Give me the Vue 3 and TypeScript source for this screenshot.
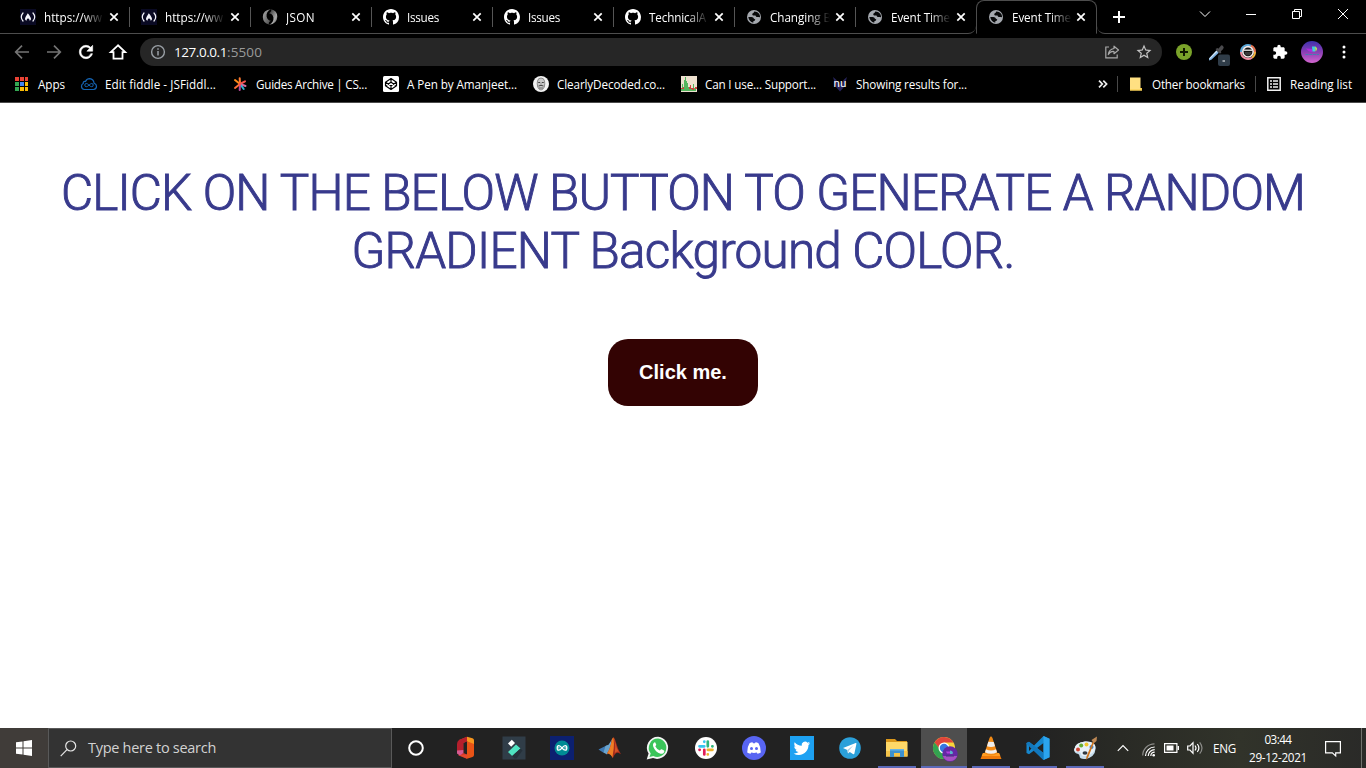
<script setup lang="ts">
interface Tab { icon: string; title: string; width: number; active?: boolean }
interface Bookmark { icon: string; title: string; width: number }
interface TaskApp { icon: string; name: string; state?: 'open' | 'current' }

// Spreads the letters of a label so that it takes exactly the given width.
const vFit = {
  mounted(el: HTMLElement, binding: { value: number }) {
    const natural = el.getBoundingClientRect().width
    const count = (el.textContent ?? '').trim().length
    if (count > 0) el.style.letterSpacing = `${(binding.value - natural) / count}px`
  },
}

const tabs: Tab[] = [
  { icon: 'fcc', title: 'https://ww', width: 58 },
  { icon: 'fcc', title: 'https://ww', width: 58 },
  { icon: 'json', title: 'JSON', width: 29 },
  { icon: 'github', title: 'Issues', width: 32 },
  { icon: 'github', title: 'Issues', width: 32 },
  { icon: 'github', title: 'TechnicalA', width: 57 },
  { icon: 'globe', title: 'Changing B', width: 61 },
  { icon: 'globe', title: 'Event Time', width: 59 },
  { icon: 'globe', title: 'Event Time', width: 59, active: true },
]

const bookmarks: Bookmark[] = [
  { icon: 'apps', title: 'Apps', width: 27 },
  { icon: 'fiddle', title: 'Edit fiddle - JSFiddl...', width: 111 },
  { icon: 'css', title: 'Guides Archive | CS...', width: 111 },
  { icon: 'codepen', title: 'A Pen by Amanjeet...', width: 110 },
  { icon: 'face', title: 'ClearlyDecoded.co...', width: 108 },
  { icon: 'caniuse', title: 'Can I use... Support...', width: 111 },
  { icon: 'nu', title: 'Showing results for...', width: 111 },
]

const apps: TaskApp[] = [
  { icon: 'cortana', name: 'Cortana' },
  { icon: 'office', name: 'Office' },
  { icon: 'filmora', name: 'Filmora' },
  { icon: 'arduino', name: 'Arduino' },
  { icon: 'matlab', name: 'MATLAB' },
  { icon: 'whatsapp', name: 'WhatsApp' },
  { icon: 'slack', name: 'Slack' },
  { icon: 'discord', name: 'Discord' },
  { icon: 'twitter', name: 'Twitter' },
  { icon: 'telegram', name: 'Telegram' },
  { icon: 'explorer', name: 'Explorer', state: 'open' },
  { icon: 'chrome', name: 'Chrome', state: 'current' },
  { icon: 'vlc', name: 'VLC', state: 'open' },
  { icon: 'vscode', name: 'Code', state: 'open' },
  { icon: 'paint', name: 'Paint', state: 'open' },
]

// Markup on a 16-unit grid, used in the browser chrome.
const small: Record<string, string> = {
  fcc: '<rect width="16" height="16" fill="#0a0a23"/><g fill="none" stroke="#f4f4fa" stroke-width="1.2" stroke-linecap="round"><path d="M3 4Q-.4 8 3 12M13 4q3.400 4 0 8"/></g><path d="M7.800 4.300q3.200 4 3.200 5.700 0 1.300-1.300 1.700 0-1.800-1.700-2.500-1.500.7-1.500 2.500Q5 11.300 5 10q0-1.500 2.800-5.700z" fill="#f4f4fa"/>',
  json: '<defs><linearGradient id="jg" x1="0" x2="1" y1="0" y2="1"><stop offset="0" stop-color="#222"/><stop offset=".65" stop-color="#aaa"/><stop offset="1" stop-color="#555"/></linearGradient><linearGradient id="jh" x1="1" x2="0" y1="1" y2="0"><stop offset="0" stop-color="#444"/><stop offset=".8" stop-color="#999"/></linearGradient></defs><path d="M9 11.800Q6 13.500 7 15.500 1 14 .8 8 1 1 9 .3 4 2.500 4.600 7.500q.8 4 4.400 4.300z" fill="url(#jh)"/><path d="M7 4.200Q10 2.500 9 .3q6.300 1.200 6.300 7.400Q15 15 7 15.700q5-2.200 4.400-7.200Q10.600 4.500 7 4.200z" fill="url(#jg)"/>',
  github: '<path fill="#fff" d="M8 0C3.58 0 0 3.58 0 8c0 3.54 2.29 6.53 5.47 7.59.4.07.55-.17.55-.38 0-.19-.01-.82-.01-1.49-2.01.37-2.53-.49-2.69-.94-.09-.23-.48-.94-.82-1.13-.28-.15-.68-.52-.01-.53.63-.01 1.08.58 1.23.82.72 1.21 1.87.87 2.33.66.07-.52.28-.87.51-1.07-1.78-.2-3.64-.89-3.64-3.95 0-.87.31-1.59.82-2.15-.08-.2-.36-1.02.08-2.12 0 0 .67-.21 2.2.82.64-.18 1.32-.27 2-.27s1.36.09 2 .27c1.53-1.04 2.2-.82 2.2-.82.44 1.1.16 1.92.08 2.12.51.56.82 1.27.82 2.15 0 3.07-1.87 3.75-3.65 3.95.29.25.54.73.54 1.48 0 1.07-.01 1.93-.01 2.2 0 .21.15.46.55.38A8.01 8.01 0 0 0 16 8c0-4.42-3.58-8-8-8z"/>',
  globe: '<circle cx="8" cy="8" r="7" fill="#a5a9af"/><path d="M8.300 2.500q-.3 1.500-2 2.200-.3 1.600.9 1.800H9.500q.5 2 2.200 1.500.8-.2 2.400.2Q14 4.500 11 3q-1.500-.6-2.700-.5zM2.300 8 5.500 8q2 .2 2.500 1.700l1.300.7q-.3 1.800-2 1.800v1.500Q3 12.800 2.300 8z" fill="#08090a"/>',
  apps: '<path d="M1 1h4v4H1zM6 1h4v4H6zM11 1h3v4h-3z" fill="#ea4335"/><path d="M1 6h4v4H1zM1 11h4v4H1z" fill="#34a853"/><path d="M6 6h4v4H6z" fill="#4285f4"/><path d="M11 6h3v4h-3zM6 11h4v4H6zM11 11h3v4h-3z" fill="#fbbc05"/><path d="M5.500 1v14M10.500 1v14M1 5.500h14M1 10.500h14" stroke="#000"/>',
  fiddle: '<g fill="none" stroke="#1565b5"><path d="M3.500 13.500h9q3-.5 3-3.300 0-2.200-2.400-3-.5-4-4.300-4.500-3 0-4.300 2.800-2.500-.4-2.300 2-1.700.6-1.700 2.700 0 3 3 3.300z" stroke-width="1.200"/><path d="M8 9.200Q6.500 7.500 5.300 7.500q-1.500 0-1.500 1.600t1.500 1.600q1.200 0 2.700-1.500t2.700-1.700q1.500 0 1.500 1.600t-1.500 1.600Q9.500 10.700 8 9.200z"/></g>',
  css: '<g stroke-width="2" stroke-linecap="round"><path d="M8 8 7.700 2.200" stroke="#ff7a30"/><path d="m8 8 5-2.700" stroke="#f5544d"/><path d="m8 8 5.500 2" stroke="#d96ba0"/><path d="m8 8 3.700 5" stroke="#35b5d5"/><path d="m8 8-.3 6" stroke="#b84a9c"/><path d="m8 8-5 4" stroke="#ff6b36"/><path d="M8 8 3 4" stroke="#ff8a18"/></g><circle cx="8" cy="8" r="1.500" fill="#f5544d"/>',
  codepen: '<rect width="16" height="16" rx="1.500" fill="#fff"/><path d="m8 2.500 5.500 3.700v3.600L8 13.500 2.500 9.800V6.200zM2.500 6.200 8 9.800l5.500-3.600M2.500 9.800 8 6.200l5.500 3.600M8 2.500v3.700M8 9.800v3.700" fill="none" stroke="#000" stroke-width="1.200" stroke-linejoin="round"/>',
  face: '<circle cx="8" cy="8" r="8" fill="#f2f2f2"/><path d="M4.500 5Q5 2 8 2t3.500 3q.7 2.500-.2 6Q10 14 8 14t-3.300-3Q3.800 7 4.500 5z" fill="#c9c9c9" stroke="#777" stroke-width=".8"/><path d="M5.200 6.500h2M8.800 6.500h2M5.500 10Q8 8.700 10.500 10" stroke="#444" fill="none"/><path d="M6 12h4" stroke="#666"/><path d="M8 7v2" stroke="#999"/>',
  caniuse: '<path fill="#eee1cf" d="M0 0h16v16H0z"/><path d="M0 13h1V8h1v5h1V4h1V1h1v4h1v2h1v4h1v2h1v-3h1v2h2V8h1v4h2v3H0z" fill="#54b65e"/><path d="M0 12h2v-1h1v2H0zM8 13v-2h1V9h1v3h3v2h-2v-1zM14 11h2v2h-2z" fill="#c9443e"/>',
  nu: '<path d="M1 1 4 3.500l4 6 4-6L15 1l-3 10-4 4.500L4 11z" fill="#27245c"/><text x="1.500" y="11" textLength="12.800" lengthAdjust="spacingAndGlyphs" font-family="Roboto, sans-serif" font-size="10.500" font-weight="400" fill="#fff">nu</text>',
  folder: '<path d="M2 1.500h10.500V12H14v2.500H2z" fill="#ffe082"/><path d="M2 14.500h12V12h-1.500v1.500H2z" fill="#f5ca45"/>',
  list: '<path d="M1.800 1.800h12.400v12.400H1.800z" fill="none" stroke="#f1f1f1" stroke-width="1.500"/><path d="M4 5h2M4 8h2M4 11h2M7 5h5M7 8h5M7 11h5" stroke="#f1f1f1" stroke-width="1.500"/>',
  info: '<circle cx="8" cy="8" r="6.400" fill="none" stroke="#9aa0a6" stroke-width="1.400"/><path d="M8 7v4.500M8 4.300v1.500" stroke="#9aa0a6" stroke-width="1.500"/>',
  back: '<path d="M15 8H2M8 1.700 1.700 8 8 14.300" fill="none" stroke="#747474" stroke-width="1.700"/>',
  forward: '<path d="M1 8h13M8 1.700 14.300 8 8 14.300" fill="none" stroke="#747474" stroke-width="1.700"/>',
  home: '<path d="M8 1.300.800 8.200h2.700v6.500h9V8.200h2.700z" fill="none" stroke="#fff" stroke-width="1.800"/>',
  share: '<g fill="none" stroke="#a9a9a9" stroke-width="1.200"><path d="M5 3H1.800v10.800h11.400V10.500"/><path d="M10 2.200 14.500 6 10 9.700V7.500Q6.500 7 4.300 10.500 4.800 5.500 10 4.500z" stroke-linejoin="round"/></g>',
  plus: '<circle cx="8" cy="8" r="8" fill="#7aa32a"/><path d="M8 4v8M4 8h8" stroke="#101800" stroke-width="2"/>',
  ring: '<g fill="none" stroke-width="2"><path d="M1 8a7 7 0 0 1 10-6.300" stroke="#5aa7d8"/><path d="M11 1.700A7 7 0 0 1 15 8" stroke="#e87352"/><path d="M15 8a7 7 0 0 1-3 5.700" stroke="#f2b43e"/><path d="M12 13.700A7 7 0 0 1 1 8" stroke="#ee8ba0"/></g><circle cx="8" cy="7.800" r="5.200" fill="#111" stroke="#f5eeee" stroke-width="1.600"/><path d="M4 5.500h8v1.500H4z" fill="#ccc"/><path d="M4.500 8h7q-.5 3.500-3.500 3.500T4.500 8z" fill="#393939"/>',
}

// Markup on a 24-unit grid, used in the toolbar and on the taskbar.
const large: Record<string, string> = {
  refresh: '<path fill="#fff" stroke="#fff" stroke-width=".700" d="M17.650 6.350A7.958 7.958 0 0 0 12 4c-4.420 0-7.990 3.580-7.990 8s3.570 8 7.990 8c3.730 0 6.840-2.550 7.730-6h-2.080A5.990 5.990 0 0 1 12 18c-3.310 0-6-2.690-6-6s2.690-6 6-6c1.660 0 3.140.69 4.220 1.780L13 11h7V4l-2.350 2.350z"/>',
  star: '<path fill="#c3c3c3" d="M22 9.240l-7.190-.62L12 2 9.190 8.630 2 9.240l5.460 4.730L5.820 21 12 17.270 18.180 21l-1.630-7.030L22 9.240zM12 15.400l-3.760 2.270 1-4.280-3.320-2.880 4.380-.38L12 6.100l1.710 4.040 4.380.38-3.320 2.880 1 4.280L12 15.400z"/>',
  puzzle: '<path fill="#fff" d="M20.500 11H19V7c0-1.100-.9-2-2-2h-4V3.500C13 2.120 11.880 1 10.500 1S8 2.120 8 3.500V5H4c-1.100 0-1.990.9-1.990 2v3.800H3.500c1.490 0 2.700 1.210 2.700 2.700s-1.210 2.700-2.700 2.700H2V20c0 1.100.9 2 2 2h3.800v-1.500c0-1.490 1.210-2.700 2.700-2.700 1.490 0 2.700 1.210 2.700 2.700V22H17c1.100 0 2-.9 2-2v-4h1.500c1.380 0 2.500-1.120 2.500-2.500S21.880 11 20.500 11z"/>',
  picker: '<path d="m3 16.500 7.500-8 2.300 2.300-7.500 7-2.300.7z" fill="#80b3e3"/><path d="m3 16.500 7.500-8 1 1-7.700 7.500z" fill="#d5e8f7"/><path d="m9.500 7 2-1 .8.8 2-2.300Q15.500 2.500 17 4t0 3.300L14.800 9.300l.6 1-1.400 1.400z" fill="#4b4b4e"/><rect x="12" y="12.500" width="12" height="11.500" rx="2" fill="#2f3c48"/><path d="M16.500 19h2.500" stroke="#fff"/>',
  cortana: '<circle cx="12" cy="12" r="6.800" fill="none" stroke="#fff" stroke-width="2"/>',
  office: '<path d="m5 4 8-3.300v4.600L9.300 7v10L13 18.500v4.200L4.500 19.500 5 17z" fill="#d8392c"/><path d="M5 4q-2 1.500-2 4v8.500q1 2.500 3.500 2l2.800-1.500V7L13 5.300V.700z" fill="#b51f2c"/><path d="M3 14.500v3l3 2 3.300-2.500v-3z" fill="#d65a92"/><path d="m13 .700 5.500 1.600q1.500.5 1.500 2V10l-7-4.500z" fill="#f7961e"/><path d="M13 5.300 20 8v11q0 1.500-1.500 2L13 22.700z" fill="#e95316"/><path d="M5.500 19.300 13 18.500v4.200z" fill="#e34a2e"/>',
  filmora: '<path d="M.500.500h23v23H.500z" fill="#303d48"/><path d="m6 7.500 3.800-3.800L13 7l-3.800 3.800z" fill="#fff"/><path d="m6 16 8-7.500 4.500 4-8.300 7.500z" fill="#4fe3c1"/><path d="m10.200 20 8.300-7.500 2 2-6 8h-2z" fill="#26313a"/>',
  arduino: '<path d="M0 0h24v24H0z" fill="#0c2070"/><circle cx="12" cy="12" r="7.500" fill="#008b94"/><path d="M12 12q-1.800-2.300-3.200-2.300-1.600 0-1.600 2.200T8.800 14.100q1.400 0 3.200-2.100 1.800-2.300 3.200-2.300 1.600 0 1.600 2.200t-1.600 2.200q-1.400 0-3.200-2.100z" fill="none" stroke="#fff" stroke-width="1.300"/><path d="M8 11.900h1.700M14.300 11.900H16" stroke="#fff" stroke-width=".8"/>',
  matlab: '<path d="m.500 13.500 7-3.500 2-1 3 2-3.500 6-3.800-.5z" fill="#3e7ab6"/><path d="m7.500 10 3-1.200Q12 7 14 3l-1.500 10L9 18.500l-3.500-2z" fill="#6aa4cd"/><path d="M9 17.500q3-4 4.500-12 .8-4 2-4 1 0 2.500 5 2 7.500 5 11.800-3-2.700-5-1-1.500 1-3.200 5-1.500-4.800-5.800-4.800z" fill="#a42b1b"/><path d="M9 17.500q3-4 4.500-12 .8-4 2-4 .8 7 .2 11-1 6-1.200 9.500Q13 17.500 9 17.500z" fill="#ef7e24"/><path d="M15.500 1.500q2 6.500 1.700 10l-.5 6q2-3 4.200-1.500-2.500-4-3.600-9.500-1-4-1.800-5z" fill="#d65327"/>',
  whatsapp: '<path d="M12.200.700A11.100 11.100 0 1 1 7 22.100l-6.300 1.500 1.900-6A11.100 11.100 0 0 1 12.200.700z" fill="#f4f6f5"/><path d="M12.200 2.600a9.200 9.200 0 1 1-4.900 17.500l-3.800.9 1.200-3.600A9.200 9.200 0 0 1 12.200 2.600z" fill="#3ac55a"/><path d="M8.300 6.500q-2 1.200-1 4.200 2 5.300 7.300 7 2.700.5 3.600-1.800.3-1.200-.2-1.500l-2.300-1.200q-.6-.2-1 .4l-.8 1q-3.300-1.300-4.600-4.300.8-1 1-1.500l-1-2.200q-.4-.5-1-.1z" fill="#fff"/>',
  slack: '<circle cx="12" cy="12" r="11" fill="#fff"/><g stroke-width="2.700" stroke-linecap="round"><path d="M10.300 5.500v.3M5.500 10.300h4.800" stroke="#36c5f0"/><path d="M13.800 5.500v4.800M18.300 10.300h.2" stroke="#2eb67d"/><path d="M13.800 13.800h4.700M13.800 18.300v.2" stroke="#ecb22e"/><path d="M5.500 13.800h.2M10.300 13.800v4.700" stroke="#e01e5a"/></g>',
  discord: '<circle cx="12" cy="12" r="12" fill="#5865f2"/><path d="M5.200 16.500Q5 11 7.500 7.200q1.500-.8 3-.9l.5 1h2l.5-1q1.500.1 3 .9 2.500 3.800 2.300 9.300-1.500 1-3.300 1.300l-.8-1.200q-2.700.6-5.400 0l-.8 1.200q-1.800-.3-3.300-1.300z" fill="#fff"/><ellipse cx="9.500" cy="12.500" rx="1.500" ry="1.600" fill="#5865f2"/><ellipse cx="14.500" cy="12.500" rx="1.500" ry="1.600" fill="#5865f2"/>',
  twitter: '<path d="M0 0h24v24H0z" fill="#1da1f2"/><path transform="translate(3.600 4) scale(.69)" fill="#fff" d="M23.953 4.570a10 10 0 01-2.825.775 4.958 4.958 0 002.163-2.723c-.951.555-2.005.959-3.127 1.184a4.920 4.920 0 00-8.384 4.482C7.690 8.095 4.067 6.130 1.640 3.162a4.822 4.822 0 00-.666 2.475c0 1.710.870 3.213 2.188 4.096a4.904 4.904 0 01-2.228-.616v.06a4.923 4.923 0 003.946 4.827 4.996 4.996 0 01-2.212.085 4.936 4.936 0 004.604 3.417 9.867 9.867 0 01-6.102 2.105c-.390 0-.779-.023-1.170-.067a13.995 13.995 0 007.557 2.209c9.053 0 13.998-7.496 13.998-13.985 0-.210 0-.420-.015-.630A9.935 9.935 0 0024 4.590z"/>',
  telegram: '<circle cx="12" cy="12" r="10.800" fill="#2ba0da"/><path d="m5 12 12.700-5q1-.2.700.9l-2 9.600q-.3 1.200-1.500.5L11.800 16 10 17.500 9.300 14z" fill="#fff"/><path d="m9.300 14 6.200-4.700L11 14.500 10 17.500z" fill="#a9cfe6"/>',
  explorer: '<path d="M1 3h9l2 2h10v4H1z" fill="#dc981b"/><path d="M1 6h21.500v14.500H1z" fill="#ffd868"/><path d="M1 15h21.500v5.500H1z" fill="#f6c449"/><path d="M5 13h14v8h-4v-4H9v4H5z" fill="#3d91cf"/><path d="M5 13h14v1.500H5z" fill="#68b4e4"/>',
  chrome: '<circle cx="12" cy="12" r="11" fill="#f8d43a"/><path d="M2.500 6.400A11 11 0 0 1 21.500 6.500H12L7.500 13z" fill="#e0453b"/><path d="M2.500 6.400A11 11 0 0 0 12 23l4.300-8-4-1-4.500-1z" fill="#33a350"/><circle cx="12" cy="12" r="5.500" fill="#fff"/><circle cx="12" cy="12" r="4.200" fill="#3778e2"/><circle cx="18" cy="18" r="7.700" fill="#6428a5"/><path d="M10.800 20h14.400a7.700 7.700 0 0 1-14.400 0z" fill="#a84fc4"/><path d="M14 15.500h5v2h-4z" fill="#b43ce0"/><path d="M18 14.500q4 .5 2.500 3.500H18z" fill="#58b3ca"/><path d="M14 20h8" stroke="#40377d"/>',
  vlc: '<path d="M4 17h16l2.500 6h-21z" fill="#ef7a0a"/><path d="M4 17h16l1.300 3H2.700z" fill="#ff9e23"/><path d="m10.500 2 1-1.500h1l1 1.500 5 15.500Q12 21.500 5.500 17.500z" fill="#f38b15"/><path d="m9.300 5.800 5.400.1 1.300 4.300q-4 1.600-8 0zM7 13.300q5 2.500 10 0l1 3q-6 3-12 0z" fill="#eee"/>',
  vscode: '<path d="m17.500 0 6 2.800v18.400l-6 2.800L8 14.500 3 18.300.500 17V7L3 5.700l5 3.800zM3 9v6l3-3zm14.500-2L11 12l6.500 5z" fill="#1687ce" fill-rule="evenodd"/><path d="m17.500 0 6 2.800v18.400l-6 2.800z" fill="#2ba4ee"/><path d="M.500 7 3 5.700 17.500 17v7L.500 8z" fill="#1278bd"/>',
  paint: '<path d="M12 5.500Q23 5 22.500 13 22 21 12.500 23q-6 .5-6-3 0-2-2-2.200Q1 17 1.200 13.500 2 6.500 12 5.500z" fill="#c5dced"/><path d="M12 5.500Q23 5 22.500 12 21 18 13 20q-5 .3-5-2 0-2-3-2Q1 16 1.200 13.500 2 6.500 12 5.500z" fill="#e7f1f8"/><circle cx="5" cy="13.500" r="2" fill="#cf4635"/><circle cx="8.200" cy="9.500" r="2" fill="#64ad32"/><circle cx="13.500" cy="8.500" r="2" fill="#efc72c"/><circle cx="18.500" cy="11" r="2" fill="#3c85cc"/><ellipse cx="12" cy="17" rx="2.500" ry="1.700" fill="#303941"/><path d="m20 5 1.500.7-6.500 16-2 2 .4-3z" fill="#ce7622"/><path d="m20 6-1.500-2L24 .5l-.5 4.500-2 1.700z" fill="#bd8855"/>',
}
</script>

<template>
  <div class="screen">
    <header class="browser">
      <div class="strip">
        <div v-for="(tab, i) in tabs" :key="i" class="tab" :class="{ active: tab.active, last: i === 7 }">
          <svg class="i16" viewBox="0 0 16 16" v-html="small[tab.icon]"></svg>
          <span class="tab-title"><span v-fit="tab.width" class="fit">{{ tab.title }}</span></span>
          <svg class="tab-close" viewBox="0 0 10 10"><path d="m1.300 1.300 7.400 7.400M8.700 1.300 1.300 8.700" /></svg>
        </div>
        <div class="strip-rest">
          <svg class="new-tab" viewBox="0 0 12 12"><path d="M6 0v12M0 6h12" /></svg>
          <div class="window-buttons">
            <svg viewBox="0 0 12 12"><path d="m1 3.500 5 5 5-5" /></svg>
            <svg viewBox="0 0 12 12"><path d="M1 6.500h10" /></svg>
            <svg viewBox="0 0 12 12"><path d="M1.500 3.500h7v7h-7zM3.500 3.500v-2h7v7h-2" /></svg>
            <svg viewBox="0 0 12 12"><path d="m1 1 10 10M11 1 1 11" /></svg>
          </div>
        </div>
      </div>

      <div class="toolbar">
        <nav class="nav">
          <svg class="i16" viewBox="0 0 16 16" v-html="small.back"></svg>
          <svg class="i16" viewBox="0 0 16 16" v-html="small.forward"></svg>
          <svg class="i20" viewBox="0 0 24 24" v-html="large.refresh"></svg>
          <svg class="i16" viewBox="0 0 16 16" v-html="small.home"></svg>
        </nav>
        <div class="omnibox">
          <svg class="i16" viewBox="0 0 16 16" v-html="small.info"></svg>
          <div class="url"><span v-fit="53" class="fit">127.0.0.1</span><span v-fit="35" class="fit port">:5500</span></div>
          <svg class="i16" viewBox="0 0 16 16" v-html="small.share"></svg>
          <svg class="i18" viewBox="0 0 24 24" v-html="large.star"></svg>
        </div>
        <div class="extensions">
          <svg class="i16" viewBox="0 0 16 16" v-html="small.plus"></svg>
          <svg class="i24" viewBox="0 0 24 24" v-html="large.picker"></svg>
          <svg class="i16" viewBox="0 0 16 16" v-html="small.ring"></svg>
          <svg class="i16" viewBox="0 0 24 24" v-html="large.puzzle"></svg>
          <svg class="avatar" viewBox="0 0 22 22">
            <defs>
              <linearGradient id="avatar-sky" x1="0" x2="0" y1="0" y2="1">
                <stop offset="0" stop-color="#3f31ae" />
                <stop offset=".5" stop-color="#8a3fb4" />
                <stop offset="1" stop-color="#d365cf" />
              </linearGradient>
            </defs>
            <circle cx="11" cy="11" r="11" fill="url(#avatar-sky)" />
            <path d="M5 7.500 11 8l.5 3q-4 0-6.500-3.500z" fill="#b028e0" />
            <path d="M11 5.500h3.500l-.5 5h-2.500z" fill="#43cfe0" />
            <path d="M14 5.500q4 2 .5 5z" fill="#b7e65a" />
            <path d="M4.500 13.500h13.500" stroke="#437eb0" stroke-dasharray="3 .7" />
          </svg>
          <svg class="menu" viewBox="0 0 4 16"><circle cx="2" cy="3" r="1.500" /><circle cx="2" cy="8" r="1.500" /><circle cx="2" cy="13" r="1.500" /></svg>
        </div>
      </div>

      <div class="bookmarks">
        <div v-for="b in bookmarks" :key="b.title" class="bookmark">
          <svg class="i16" viewBox="0 0 16 16" v-html="small[b.icon]"></svg>
          <span v-fit="b.width" class="fit">{{ b.title }}</span>
        </div>
        <div class="bookmarks-end">
          <svg class="more" viewBox="0 0 10 8"><path d="m1 .7 3.300 3.300L1 7.300M5.300.7 8.600 4 5.300 7.300" /></svg>
          <i class="divider"></i>
          <svg class="i16 folder" viewBox="0 0 16 16" v-html="small.folder"></svg>
          <span v-fit="93" class="fit">Other bookmarks</span>
          <i class="divider"></i>
          <svg class="i16 list" viewBox="0 0 16 16" v-html="small.list"></svg>
          <span v-fit="62" class="fit">Reading list</span>
        </div>
      </div>
    </header>

    <main class="page">
      <h1>
        <span v-fit="1244" class="fit">CLICK ON THE BELOW BUTTON TO GENERATE A RANDOM</span>
        <span v-fit="663" class="fit">GRADIENT Background COLOR.</span>
      </h1>
      <button type="button">Click me.</button>
    </main>

    <footer class="taskbar">
      <div class="start">
        <svg class="i16" viewBox="0 0 16 16"><path fill="#fff" d="M0 2.300 6.500 1.400v6.100H0zM7.500 1.200 16 0v7.500H7.500zM0 8.500h6.500v6.100L0 13.700zM7.500 8.500H16V16l-8.500-1.200z" /></svg>
      </div>
      <div class="search">
        <svg class="lens" viewBox="0 0 17 17"><circle cx="10.700" cy="6" r="5" /><path d="M7 9.700.700 16.200" /></svg>
        <span v-fit="128" class="fit">Type here to search</span>
      </div>
      <div class="apps">
        <div v-for="app in apps" :key="app.name" class="app" :class="[app.state, app.icon]" :title="app.name">
          <svg class="i24" viewBox="0 0 24 24" v-html="large[app.icon]"></svg>
        </div>
      </div>
      <div class="tray">
        <svg class="chevron" viewBox="0 0 12 8"><path d="M.800 6.800 6 1.600l5.200 5.200" /></svg>
        <svg class="wifi" viewBox="0 0 14 14">
          <path class="dim" d="M.700 12.500A11.800 11.800 0 0 1 12.500.800" />
          <path d="M3.500 13A9.200 9.200 0 0 1 12.700 4M6.200 13A6.500 6.500 0 0 1 12.700 6.700M8.800 13a4 4 0 0 1 3.900-3.800" />
          <circle cx="11.700" cy="12.200" r="1.300" />
        </svg>
        <svg class="battery" viewBox="0 0 15 10"><path d="M.600.600h12.300v8.800H.600zM14.400 3v4" /><path class="solid" d="M2.500 2.500h7v5h-7z" /></svg>
        <svg class="sound" viewBox="0 0 17 14">
          <path d="M.700 5H3l3-3.300v10.600L3 9H.700zM8 4.500q2 2.500 0 5M10.300 3q3.200 4 0 8" />
          <path class="dim" d="M12.700 1.300q4.600 5.700 0 11.400" />
        </svg>
        <span v-fit="23" class="fit lang">ENG</span>
        <div class="clock">
          <span v-fit="27" class="fit">03:44</span>
          <span v-fit="58" class="fit">29-12-2021</span>
        </div>
        <svg class="notice" viewBox="0 0 16 17"><path d="M.600 1.600h14.800v11.300h-4.700v3L7.300 12.900H.600z" /></svg>
        <i class="peek"></i>
      </div>
    </footer>
  </div>
</template>

<style>
body {
  overflow: hidden;
}
</style>

<style scoped>
.screen {
  display: flex;
  flex-direction: column;
  width: 1366px;
  height: 768px;
  background: #fff;
  color: #fff;
  font: 500 11.7px/16px 'Open Sans', 'Noto Sans', sans-serif;
}

svg {
  display: block;
  flex: none;
  overflow: visible;
}

.i16 { width: 16px; height: 16px; }
.i18 { width: 18px; height: 18px; }
.i20 { width: 20px; height: 20px; }
.i24 { width: 24px; height: 24px; }

.fit {
  display: inline-block;
  flex: none;
  white-space: nowrap;
}

.browser {
  box-sizing: border-box;
  height: 103px;
  background: #000;
  border-bottom: 1px solid #4a4a4a;
}

/* Tab strip */
.strip {
  display: flex;
  height: 34px;
}

.strip::before {
  content: '';
  width: 9px;
  border-bottom: 1px solid #4d4d4d;
}

.tab {
  display: flex;
  box-sizing: border-box;
  align-items: center;
  width: 121px;
  padding-left: 11px;
  border-bottom: 1px solid #4d4d4d;
  background: linear-gradient(#555, #555) 100% 7px / 1px 20px no-repeat;
}

.tab.last {
  width: 120px;
  background: none;
  border-bottom-right-radius: 8px;
}

.tab.active {
  width: 121px;
  padding-left: 11px;
  background: #000;
  border: 1px solid #4d4d4d;
  border-bottom-color: transparent;
  border-radius: 8px 8px 0 0;
}

.tab-title {
  width: 62px;
  margin-left: 8px;
  overflow: hidden;
  white-space: nowrap;
  mask-image: linear-gradient(90deg, #000 38px, transparent 60px);
}

.tab-close {
  width: 10px;
  height: 10px;
  margin-left: 3px;
  fill: none;
  stroke: #fff;
  stroke-width: 1.7;
}

.active .tab-close { margin-left: 2px; }

.strip-rest {
  display: flex;
  flex: 1;
  justify-content: space-between;
  border-bottom: 1px solid #4d4d4d;
  border-bottom-left-radius: 8px;
}

.new-tab {
  width: 12px;
  height: 12px;
  margin: 11px 0 0 16px;
  fill: none;
  stroke: #fff;
  stroke-width: 2;
}

.window-buttons {
  display: flex;
  gap: 34px;
  padding: 8px 17px 0 0;
}

.window-buttons svg {
  width: 12px;
  height: 12px;
  fill: none;
  stroke: #fff;
}

/* Toolbar */
.toolbar {
  display: flex;
  height: 36px;
  align-items: center;
}

.nav {
  display: flex;
  box-sizing: border-box;
  align-items: center;
  width: 140px;
  gap: 16px;
  padding-left: 14px;
}

.nav .i20 { margin: 0 -2px; }

.omnibox {
  display: flex;
  box-sizing: border-box;
  align-items: center;
  width: 1022px;
  height: 28px;
  padding: 0 9px 0 10px;
  border-radius: 14px;
  background: #262626;
}

.url {
  flex: 1;
  padding-left: 8px;
  font-size: 13.5px;
  line-height: 20px;
}

.port { color: #9a9a9a; font-weight: 400; }
.omnibox .i18 { margin-left: 15px; }

.extensions {
  display: flex;
  align-items: center;
  padding-left: 14px;
}

.extensions .i24 { margin: 3px 10px 0 14px; }
.extensions .i24 + .i16 { margin-right: 16px; }

.avatar {
  width: 22px;
  height: 22px;
  margin-left: 13px;
}

.menu {
  width: 4px;
  height: 16px;
  margin-left: 19px;
  fill: #fff;
}

/* Bookmarks */
.bookmarks {
  display: flex;
  align-items: center;
  height: 28px;
  gap: 16px;
  padding: 0 14px;
}

.bookmark {
  display: flex;
  align-items: center;
  gap: 8px;
}

.bookmarks-end {
  display: flex;
  align-items: center;
  margin-left: auto;
}

.more {
  width: 10px;
  height: 8px;
  margin-right: 9px;
  fill: none;
  stroke: #eee;
  stroke-width: 1.7;
}

.divider {
  width: 1px;
  height: 16px;
  background: #484848;
}

.folder { margin: 0 8px 0 10px; }
.bookmarks-end .divider + .list { margin: 0 8px 0 10px; }
.folder + .fit { margin-right: 10px; }

/* Page */
.page {
  display: flex;
  flex: 1;
  flex-direction: column;
  align-items: center;
  background: #fff;
}

h1 {
  display: flex;
  flex-direction: column;
  align-items: center;
  margin: 61px 0 59px;
  color: #383a8c;
  font: 300 49.500px/58px Roboto, sans-serif;
  -webkit-text-stroke: 0.9px #383a8c;
}

button {
  width: 150px;
  height: 67px;
  padding: 0 0 2px;
  border: 0;
  border-radius: 20px;
  background: #330303;
  color: #fff;
  font: bold 20px/24px 'Liberation Sans', Arial, sans-serif;
}

/* Taskbar */
.taskbar {
  display: flex;
  height: 40px;
  background: linear-gradient(90deg, #222 0, #222 1030px, #292a25 1120px, #31332a 1240px, #2a2a28 1366px);
}

.start {
  display: flex;
  align-items: center;
  justify-content: center;
  width: 48px;
  background: #403c39;
}

.search {
  display: flex;
  box-sizing: border-box;
  align-items: center;
  width: 344px;
  padding-left: 11px;
  border: 1px solid #595959;
  background: #333;
  color: #d2d2d2;
  font-size: 14.5px;
  font-weight: 400;
  line-height: 20px;
}

.lens {
  width: 17px;
  height: 17px;
  margin-right: 11px;
  fill: none;
  stroke: #e6e6e6;
  stroke-width: 1.2;
}

.apps { display: flex; }

.app {
  display: flex;
  box-sizing: border-box;
  align-items: center;
  justify-content: center;
  width: 48px;
}

.app.cortana { width: 50px; padding-right: 2px; }
.app.explorer { margin-left: -1px; }

.app.open,
.app.current {
  width: 47px;
  background: linear-gradient(#5b69b8, #5b69b8) 5px 100% / 38px 2px no-repeat;
}

.app.current {
  background: linear-gradient(#5b69b8, #5b69b8) 1px 100% / 46px 2px no-repeat, linear-gradient(#4e4e4e, #4e4e4e) 1px 0 / 46px 40px no-repeat;
}

.tray {
  display: flex;
  flex: 1;
  align-items: center;
  padding-left: 9px;
}

.tray svg {
  fill: none;
  stroke: #fff;
  stroke-width: 1.2;
}

.tray .dim { stroke: #8b8b88; }
.tray .solid { fill: #fff; stroke: none; }
.wifi circle { fill: #fff; stroke: none; }
.chevron { width: 12px; height: 8px; }
.wifi { width: 14px; height: 14px; margin: 3px 0 0 13px; }
.battery { width: 15px; height: 10px; margin-left: 8px; }
.sound { width: 17px; height: 14px; margin-left: 8px; }
.lang { margin-left: 9px; }

.clock {
  display: flex;
  flex-direction: column;
  align-items: center;
  width: 58px;
  margin-left: 13px;
  line-height: 18px;
}

.notice { width: 16px; height: 17px; margin-left: 18px; }

.peek {
  width: 1px;
  height: 40px;
  margin-left: 20px;
  background: #70716d;
}
</style>
